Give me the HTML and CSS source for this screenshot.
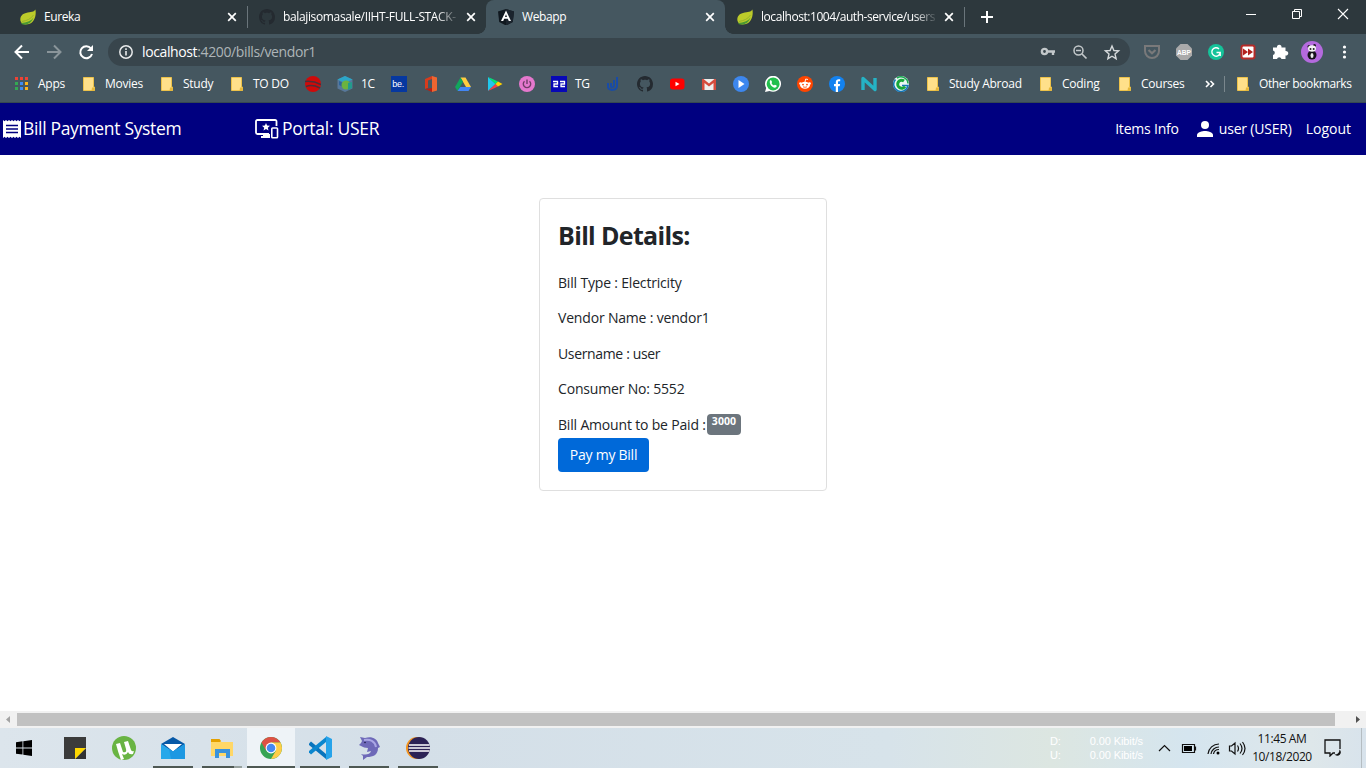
FILE: index.html
```html
<!DOCTYPE html>
<html lang="en">
<head>
<meta charset="utf-8">
<title>Webapp</title>
<link rel="stylesheet" href="styles.css">
</head>
<body>
<svg class="defs" width="0" height="0">
  <symbol id="leaf" viewBox="0 0 16 16"><path d="M15.400.600C14 3 11 3.200 6 4C1 5 0 9 .4 11.500C1 15 4 15.800 8 15.300C14 14.500 16.700 7 15.400.600z" fill="#bccb2a"/><path d="M1.500 14C6 13.500 11 12.500 13.500 8.500C11 15 6 16.500 1.500 15z" fill="#4c9a32"/><path d="M2 12.500C7 11.500 11 10 13.500 6" stroke="#98b42c" fill="none"/></symbol>
  <symbol id="close" viewBox="0 0 10 10"><path d="M1.200 1.200l7.600 7.600M8.800 1.200L1.200 8.800" stroke="#fff" stroke-width="1.700"/></symbol>
  <symbol id="folder" viewBox="0 0 14 16"><path d="M1.500 1.500h10v9.500h1v3.500h-11z" fill="#ffe08a" stroke="#edc24a"/><path d="M10 11.500h2.500V15H9.500z" fill="#e6b83a"/></symbol>
  <symbol id="github" viewBox="0 0 16 16"><path d="M8 0C3.580 0 0 3.580 0 8c0 3.540 2.290 6.530 5.470 7.590.4.070.55-.17.55-.38 0-.19-.01-.82-.01-1.490-2.010.37-2.530-.49-2.690-.94-.09-.23-.48-.94-.82-1.130-.28-.15-.68-.52-.01-.53.63-.01 1.080.58 1.230.82.72 1.210 1.870.87 2.330.66.070-.52.28-.87.51-1.070-1.780-.2-3.640-.89-3.640-3.950 0-.87.31-1.590.82-2.150-.08-.2-.36-1.020.08-2.120 0 0 .67-.21 2.200.82.64-.18 1.320-.27 2-.27s1.360.09 2 .27c1.530-1.040 2.200-.82 2.200-.82.44 1.100.16 1.920.08 2.120.51.56.82 1.270.82 2.150 0 3.070-1.870 3.750-3.650 3.950.29.25.54.73.54 1.480 0 1.070-.01 1.930-.01 2.200 0 .21.15.46.55.38A8.010 8.010 0 0 0 16 8c0-4.420-3.580-8-8-8z" fill="#242a30"/></symbol>
</svg>

<header class="tabs">
  <div class="tab"><svg width="17" height="16"><use href="#leaf"/></svg><span class="tab-title">Eureka</span><svg class="x" width="10" height="10"><use href="#close"/></svg></div>
  <div class="tab ruled"><svg width="16" height="16"><use href="#github"/></svg><span class="tab-title fade t2">balajisomasale/IIHT-FULL-STACK-</span><svg class="x" width="10" height="10"><use href="#close"/></svg></div>
  <div class="tab active"><svg width="16" height="16" viewBox="0 0 16 16"><path d="M8 0l8 2.500-1.200 10.500L8 16.500 1.200 13 0 2.500z" fill="#10181f"/><path d="M8 0v16.500L14.800 13 16 2.500z" fill="#1b242d"/><path d="M3 12L8 1.500 13 12h-2.200l-1-2.300H6.200l-1 2.300zM7 7.900h2L8 5.200z" fill="#fff"/></svg><span class="tab-title">Webapp</span><svg class="x" width="10" height="10"><use href="#close"/></svg></div>
  <div class="tab"><svg width="17" height="16"><use href="#leaf"/></svg><span class="tab-title fade t4">localhost:1004/auth-service/users</span><svg class="x" width="10" height="10"><use href="#close"/></svg></div>
  <svg class="newtab" width="44" height="34" viewBox="0 0 44 34"><path d="M.5 7v20" stroke="#6a757b"/><path d="M17 17h12M23 11v12" stroke="#fff" stroke-width="2"/></svg>
  <div class="window-controls">
    <svg width="46" height="28" viewBox="0 0 46 28"><path d="M18 14.500h10" stroke="#fff"/></svg>
    <svg width="46" height="28" viewBox="0 0 46 28"><path d="M18.500 11.500h7v7h-7zM20.500 11V9.500h7v7H26" stroke="#fff" fill="none"/></svg>
    <svg width="46" height="28" viewBox="0 0 46 28"><path d="M18 9l10 10M28 9L18 19" stroke="#fff" stroke-width="1.100"/></svg>
  </div>
</header>

<div class="toolbar">
  <svg width="32" height="34" viewBox="0 0 32 34"><path d="M23 18H10M16 11.500L9.500 18l6.500 6.500" fill="none" stroke="#fff" stroke-width="2"/></svg>
  <svg width="32" height="34" viewBox="0 0 32 34"><path d="M9 18h13M16 11.500l6.500 6.500-6.500 6.500" fill="none" stroke="#8a959a" stroke-width="2"/></svg>
  <svg width="32" height="34" viewBox="0 0 32 34"><path d="M21 14.500A6 6 0 1 0 22 20" fill="none" stroke="#fff" stroke-width="2"/><path d="M23 11v6h-6z" fill="#fff"/></svg>
  <div class="omnibox">
    <svg width="16" height="16" viewBox="0 0 16 16"><circle cx="8" cy="8" r="6.200" fill="none" stroke="#e8eaeb" stroke-width="1.500"/><path d="M8 7v4.500M8 4.300v1.600" stroke="#e8eaeb" stroke-width="1.600"/></svg>
    <span class="url"><b>localhost</b>:4200/bills/vendor1</span>
    <svg width="32" height="28" viewBox="0 0 32 28"><circle cx="12.500" cy="13.500" r="2.600" fill="none" stroke="#c3c8ca" stroke-width="2.400"/><path d="M15 13.500h8M21 13.500v3.500" stroke="#c3c8ca" stroke-width="2.400"/></svg>
    <svg width="32" height="28" viewBox="0 0 32 28"><circle cx="14.500" cy="12.500" r="4.500" fill="none" stroke="#c3c8ca" stroke-width="1.500"/><path d="M12 12.500h5M18 16l4.500 4.500" stroke="#c3c8ca" stroke-width="1.700"/></svg>
    <svg width="32" height="28" viewBox="0 0 32 28"><path d="M16 8l1.900 4.500 4.700.4-3.600 3.100 1.100 4.700-4.100-2.500-4.100 2.500 1.100-4.700-3.600-3.100 4.700-.4z" fill="none" stroke="#d5d9db" stroke-width="1.400"/></svg>
  </div>
  <div class="extensions">
    <svg width="32" height="34" viewBox="0 0 32 34"><path d="M9 12h14v5a7 7 0 0 1-14 0z" fill="none" stroke="#79797a" stroke-width="2"/><path d="M12.500 16l3.500 3.300 3.500-3.300" fill="none" stroke="#79797a" stroke-width="2.200"/></svg>
    <svg width="32" height="34" viewBox="0 0 32 34"><path d="M12.500 10h7l4.500 4.500v7L19.500 26h-7L8 21.500v-7z" fill="#aaa"/><text x="16" y="20.700" class="abp" textLength="14" lengthAdjust="spacingAndGlyphs">ABP</text></svg>
    <svg width="32" height="34" viewBox="0 0 32 34"><circle cx="16" cy="18" r="8" fill="#15c39a"/><path d="M19 15a4.200 4.200 0 1 0 1.200 3.500H16.500M20.200 18.500V22" fill="none" stroke="#fff" stroke-width="1.400"/></svg>
    <svg width="32" height="34" viewBox="0 0 32 34"><rect x="8.500" y="10.500" width="15" height="15" rx="3" fill="#b62b28"/><rect x="10.500" y="12.500" width="11" height="11" rx="1" fill="#fff"/><path d="M11 14.500l5 3.500-5 3.500zM16 14.500l5 3.500-5 3.500z" fill="#b3201d"/></svg>
    <svg width="32" height="34" viewBox="0 0 32 34"><path d="M9 13.500h4a2.300 2.300 0 1 1 4.500 0h4V17a2.300 2.300 0 1 1 0 4.500V25h-4a2.300 2.300 0 0 0-4.500 0H9v-4a2.300 2.300 0 0 0 0-4.500z" fill="#fff"/></svg>
    <svg width="32" height="34" viewBox="0 0 32 34"><circle cx="16" cy="18" r="11" fill="#b46ade"/><ellipse cx="16" cy="21" rx="4.500" ry="4.500" fill="#16131a"/><ellipse cx="16" cy="21.500" rx="1.500" ry="2.500" fill="#eee"/><circle cx="13" cy="12.500" r="1.500" fill="#16131a"/><circle cx="18.500" cy="11.500" r="1.500" fill="#16131a"/><ellipse cx="16" cy="14.500" rx="4" ry="3.300" fill="#f4f4f4"/><circle cx="14.500" cy="15" r="1" fill="#222"/><circle cx="17.700" cy="15" r="1" fill="#222"/></svg>
    <svg width="32" height="34" viewBox="0 0 32 34"><g fill="#fff"><circle cx="16.500" cy="13" r="1.600"/><circle cx="16.500" cy="18" r="1.600"/><circle cx="16.500" cy="23" r="1.600"/></g></svg>
  </div>
</div>

<nav class="bookmarks">
  <div class="bm apps"><svg width="16" height="16" viewBox="0 0 16 16"><path d="M2 1h3v3H2zM7 1h3v3H7zM12 1h3v3h-3z" fill="#ee4335"/><path d="M2 6h3v3H2zM2 11h3v3H2z" fill="#34a853"/><path d="M7 6h3v3H7zM7 11h3v3H7z" fill="#3b8cf5"/><path d="M12 6h3v3h-3zM12 11h3v3h-3z" fill="#fbb51a"/></svg><span>Apps</span></div>
  <div class="bm movies"><svg width="14" height="16"><use href="#folder"/></svg><span>Movies</span></div>
  <div class="bm study"><svg width="14" height="16"><use href="#folder"/></svg><span>Study</span></div>
  <div class="bm todo"><svg width="14" height="16"><use href="#folder"/></svg><span>TO DO</span></div>
  <div class="bm"><svg width="16" height="16" viewBox="0 0 16 16"><circle cx="8" cy="8" r="8" fill="#cf0a0a"/><path d="M0 5.500C5 5 11 6 16 8.500M1 10.500c4-1.500 9-1 14 1.500" stroke="#4c3038" stroke-width="1.500" fill="none"/></svg></div>
  <div class="bm onec"><svg width="16" height="16" viewBox="0 0 16 16"><path d="M8 0l7.500 3.500v9L8 16 .5 12.500v-9z" fill="#58789a"/><path d="M8 0l7.500 3.500L8 7 .5 3.500z" fill="#2ba6c8"/><path d="M2 5l4 2v4l-4-2z" fill="#2d649c"/><circle cx="9" cy="9" r="4.500" fill="#6cb33f"/><path d="M11 7l4-1v6l-4 2z" fill="#239b8c"/></svg><span>1C</span></div>
  <div class="bm"><svg width="16" height="16" viewBox="0 0 16 16"><path d="M0 0h16v16H0z" fill="#0638a0"/><text x="1.300" y="11" class="be">be.</text></svg></div>
  <div class="bm"><svg width="16" height="16" viewBox="0 0 16 16"><path d="M9 0L2 3v10l3-1V4.500L9 3z" fill="#d83b1c"/><path d="M9 0l5 1.500v13L9 16z" fill="#ef6530"/><path d="M2 13l7-1v4z" fill="#ba1e12"/></svg></div>
  <div class="bm"><svg width="16" height="16" viewBox="0 0 16 16"><path d="M5.500 1.500h5L16 11h-5z" fill="#ffcd40"/><path d="M5.500 1.500L0 11l2.500 4L8 5.700z" fill="#11a65c"/><path d="M5.300 11H16l-2.500 4h-11z" fill="#4286f5"/></svg></div>
  <div class="bm"><svg width="16" height="16" viewBox="0 0 16 16"><path d="M1 1v14l7.500-7z" fill="#20c7ed"/><path d="M1 1l7.500 7L11 5.500z" fill="#00e676"/><path d="M1 15l7.500-7 2.500 2.500z" fill="#f0404c"/><path d="M8.500 8L11 5.500 15.500 8 11 10.500z" fill="#ffd200"/></svg></div>
  <div class="bm"><svg width="16" height="16" viewBox="0 0 16 16"><circle cx="8" cy="8" r="8" fill="#e578ce"/><path d="M5.500 5.200a3.700 3.700 0 1 0 5 0M8 3.500v4.500" fill="none" stroke="#713d68" stroke-width="1.400"/></svg></div>
  <div class="bm tg"><svg width="16" height="16" viewBox="0 0 16 16"><path d="M0 0h16v16H0z" fill="#0808b6"/><path d="M2 5.500h4.500V8H3v2.500h4M9 5.500h4.500V8H10v2.500h4" fill="none" stroke="#fff" stroke-width="1.300"/></svg><span>TG</span></div>
  <div class="bm"><svg width="16" height="16" viewBox="0 0 16 16"><path d="M3 7v4c0 4 9 4 9-1V1M6 7v3c0 2 3 2 3-1V4" fill="none" stroke="#184ba8" stroke-width="2"/></svg></div>
  <div class="bm"><svg width="16" height="16"><use href="#github"/></svg></div>
  <div class="bm"><svg width="16" height="16" viewBox="0 0 16 16"><rect x="1" y="2.500" width="14.500" height="11" rx="3" fill="#f00"/><path d="M6.500 5.700v4.600l4-2.300z" fill="#fff"/></svg></div>
  <div class="bm"><svg width="16" height="16" viewBox="0 0 16 16"><path d="M1 3h14v11H1z" fill="#eee"/><path d="M1 3v11h2.500V7L8 10.500 12.500 7v7H15V3h-1.500L8 7.500 2.500 3z" fill="#d54b3d"/></svg></div>
  <div class="bm"><svg width="16" height="16" viewBox="0 0 16 16"><circle cx="8" cy="8" r="8" fill="#3d87ee"/><path d="M5.500 4v8l6-4z" fill="#fff"/></svg></div>
  <div class="bm"><svg width="16" height="16" viewBox="0 0 16 16"><path d="M0 16l1.200-4A8 8 0 1 1 4.500 15z" fill="#fff"/><circle cx="8.100" cy="7.900" r="6.500" fill="#22bf4d"/><path d="M5 4.500c1-.7 1.500 0 2 1.500 0 1-1 1 .2 2.300C8.600 9.800 9 9.400 9.800 8.800c1 .2 2 .8 2 1.300-1.300 4.200-8.500-.8-6.800-5.600z" fill="#fff"/></svg></div>
  <div class="bm"><svg width="16" height="16" viewBox="0 0 16 16"><circle cx="8" cy="8" r="8" fill="#ff4500"/><ellipse cx="8" cy="9.300" rx="4.900" ry="3.500" fill="#fff"/><circle cx="3.500" cy="7.500" r="1.300" fill="#fff"/><circle cx="12.500" cy="7.500" r="1.300" fill="#fff"/><circle cx="6" cy="8.600" r=".9" fill="#ff4500"/><circle cx="10" cy="8.600" r=".9" fill="#ff4500"/><path d="M8 6l.7-3L11 3.500" fill="none" stroke="#fff" stroke-width=".9"/><path d="M6 10.800q2 1 4 0" fill="none" stroke="#ff4500" stroke-width=".8"/></svg></div>
  <div class="bm"><svg width="16" height="16" viewBox="0 0 16 16"><circle cx="8" cy="8" r="8" fill="#1382f0"/><path d="M6.800 16v-5.700H5V8h1.800V6.200c0-2 1.200-3 3-3h1.400v2H10c-.8 0-1 .4-1 1V8h2.100l-.4 2.300H9V16z" fill="#fff"/></svg></div>
  <div class="bm"><svg width="16" height="16" viewBox="0 0 16 16"><path d="M2 14V2.500L14 13.500V2" fill="none" stroke="#25b3c5" stroke-width="3.400" stroke-linejoin="round"/></svg></div>
  <div class="bm"><svg width="16" height="16" viewBox="0 0 16 16"><circle cx="8" cy="8" r="8" fill="#e9f7f3"/><path d="M2.500 3.500A7.200 7.200 0 1 0 15 9.500H9" fill="none" stroke="#1577b8" stroke-width="1.500"/><path d="M11 5A4 4 0 1 0 12 10.500" fill="none" stroke="#17a83a" stroke-width="3"/><path d="M4 2.200A7 7 0 0 1 15 7.500" fill="none" stroke="#18a850" stroke-width="1.500"/></svg></div>
  <div class="bm abroad"><svg width="14" height="16"><use href="#folder"/></svg><span>Study Abroad</span></div>
  <div class="bm coding"><svg width="14" height="16"><use href="#folder"/></svg><span>Coding</span></div>
  <div class="bm courses"><svg width="14" height="16"><use href="#folder"/></svg><span>Courses</span></div>
  <svg class="more" width="19" height="16" viewBox="0 0 19 16"><path d="M1 5l3 3-3 3M5.500 5l3 3-3 3" fill="none" stroke="#fff" stroke-width="1.600"/></svg>
  <div class="bm other"><svg width="14" height="16"><use href="#folder"/></svg><span>Other bookmarks</span></div>
</nav>

<div class="navbar">
  <a class="brand"><svg width="18" height="18" viewBox="0 0 18 18"><path d="M0 0l1.500 1.200L3 0l1.500 1.200L6 0l1.500 1.200L9 0l1.500 1.200L12 0l1.500 1.200L15 0l1.500 1.200L18 0v18l-1.500-1.200L15 18l-1.500-1.200L12 18l-1.500-1.200L9 18l-1.500-1.200L6 18l-1.500-1.200L3 18l-1.500-1.200L0 18z" fill="#fff"/><path d="M3 5.500h12M3 9h12M3 12.500h12" stroke="#000080" stroke-width="1.500"/></svg><span>Bill Payment System</span></a>
  <a class="portal"><svg width="24" height="20" viewBox="0 0 24 20"><path d="M21.500 7V2.500Q21.500 1 20 1H2.500Q1 1 1 2.500v11Q1 15 2.500 15H14" fill="none" stroke="#fff" stroke-width="1.800"/><path d="M8 15v2H6v2h9v-4z" fill="#fff"/><path d="M11 4l1.100 2.600 2.900.2-2.200 1.900.7 2.800L11 10l-2.500 1.500.7-2.800L7 6.800l2.900-.2z" fill="#fff"/><rect x="16.800" y="9" width="5.700" height="9.800" rx=".8" fill="#000080" stroke="#fff" stroke-width="1.600"/></svg><span>Portal: USER</span></a>
  <div class="links"><a class="items">Items Info</a><a class="user"><svg width="16" height="16" viewBox="0 0 16 16"><circle cx="8" cy="4" r="4" fill="#fff"/><path d="M0 16v-2c0-2.700 5.300-4 8-4s8 1.300 8 4v2z" fill="#fff"/></svg><span>user (USER)</span></a><a class="logout">Logout</a></div>
</div>

<main>
  <section class="card">
    <h2>Bill Details:</h2>
    <p>Bill Type : Electricity</p>
    <p>Vendor Name : vendor1</p>
    <p class="username">Username : user</p>
    <p>Consumer No: 5552</p>
    <div class="amount"><span>Bill Amount to be Paid :</span><strong class="badge">3000</strong></div>
    <button>Pay my Bill</button>
  </section>
</main>

<div class="scrollbar">
  <svg width="17" height="17" viewBox="0 0 17 17"><path d="M10 5v7L6 8.500z" fill="#a3a3a3"/></svg>
  <div class="thumb"></div>
  <svg class="right-arrow" width="17" height="17" viewBox="0 0 17 17"><path d="M7 5v7l4-3.500z" fill="#505050"/></svg>
</div>

<footer class="taskbar">
  <div class="task start"><svg width="16" height="16" viewBox="0 0 16 16"><path d="M0 2.200L6.500 1.300v6.200H0zM7.300 1.200L16 0v7.500H7.300zM0 8.400h6.500v6.200L0 13.800zM7.300 8.400H16V16l-8.700-1.200z"/></svg></div>
  <div class="task"><svg width="22" height="22" viewBox="0 0 22 22"><path d="M0 0h22v11L11 22H0z" fill="#3b3b3b"/><path d="M22 11v11H11z" fill="#333"/><path d="M11 11h11L11 22z" fill="#ffd800"/></svg></div>
  <div class="task"><svg width="24" height="24" viewBox="0 0 24 24"><circle cx="12" cy="12" r="12" fill="#69b443"/><path d="M4 8l4-1 3 9q4 1 3-3l-2-7 4-1 3 9q1 2 3 1l-1 3q-4 1-5-2-2 4-6 2l2 5-3 1q-3-8-5-16z" fill="#fff"/></svg></div>
  <div class="task run"><svg width="24" height="24" viewBox="0 0 24 24"><path d="M0 8L12 1l12 7-12 9z" fill="#0759a7"/><path d="M3 8h18l-9 7.500z" fill="#fff"/><path d="M0 8l12 7.500L24 8v15H0z" fill="#28a8ea"/><path d="M24 8v15H10l-2-10 4 2.500z" fill="#1d98e2"/></svg></div>
  <div class="task run explorer"><svg width="22" height="22" viewBox="0 0 22 22"><path d="M0 3h9l1.500 2H22v14H0z" fill="#ffd767"/><path d="M0 2h8.500L10 4 9 5H0z" fill="#e4a000"/><path d="M4 12h15v9h-4v-5H8v5H4z" fill="#3a92dc"/></svg></div>
  <div class="task run current"><svg width="22" height="22" viewBox="0 0 22 22"><circle cx="11" cy="11" r="11" fill="#37a454"/><path d="M1.500 5.500A11 11 0 0 1 20.500 5.500H11L6.200 13.800z" fill="#dd5144"/><path d="M11 5.500h9.500A11 11 0 0 1 11 22l4.800-8.300z" fill="#ffcd46"/><circle cx="11" cy="11" r="5.400" fill="#fff"/><circle cx="11" cy="11" r="4.300" fill="#4688f1"/></svg></div>
  <div class="task run"><svg width="24" height="24" viewBox="0 0 24 24"><path d="M1 7.500l2-2 15 12.500v5L1 9z" fill="#0874bd"/><path d="M1 16.500l2 2L18 6V1L1 15z" fill="#0b86ce"/><path d="M18 0l6 3v18l-6 3z" fill="#26a3ea"/></svg></div>
  <div class="task run"><svg width="24" height="24" viewBox="0 0 24 24"><path d="M3 1l5 1c7-2 12 1 13 5l2 4-2 1c0 7-5 9-11 9l-4 3 0-4-2-2c4 1 9 1 10-3l-4 1 1-4c-3 0-5-1-7-2l-2-1 2-2 1-2z" fill="#6e69b8"/><path d="M7 4c6-1 11 1 12 7" stroke="#aaa7e5" fill="none" stroke-width="2"/><circle cx="8" cy="6.500" r=".8" fill="#1b1844"/></svg></div>
  <div class="task run"><svg width="24" height="24" viewBox="0 0 24 24"><circle cx="11" cy="12" r="11" fill="#f4941e"/><circle cx="13" cy="12" r="11" fill="#2c2255"/><path d="M3 9h20.500M2.500 12H24M3 15h20.500" stroke="#fff" stroke-width="1.600"/></svg></div>
  <div class="speed"><div><span>D:</span><span>0.00 Kibit/s</span></div><div><span>U:</span><span>0.00 Kibit/s</span></div></div>
  <svg class="tray" width="96" height="40" viewBox="0 0 96 40"><g fill="none" stroke="#111" stroke-width="1.200"><path d="M9 23l5.500-5.500L20 23"/><path d="M32.500 16.500h12v8h-12z"/><path d="M45.500 18.500v4"/><path d="M58 26a11 11 0 0 1 11-10M61 26a8 8 0 0 1 8-7M63.500 26a5.500 5.500 0 0 1 5.500-4.500"/><path d="M79.500 18v5h2l3.500 3V15l-3.500 3zM87.500 17.500q2 3 0 6M90 15.500q4 5 0 10M92.500 14q5 6.500 0 13"/></g><path d="M34 18h8v5h-8z"/><circle cx="68" cy="25" r="1.500"/></svg>
  <div class="clock"><span class="time">11:45 AM</span><span class="date">10/18/2020</span></div>
  <svg class="notify" width="18" height="18" viewBox="0 0 18 18"><path d="M11 14H9l-3 3v-3H1V1h15v9" fill="none" stroke="#111" stroke-width="1.300"/><path d="M15.500 10.500a3.500 3.500 0 1 1-5 4.800c3 .7 5-1.500 5-4.800z" fill="#111"/></svg>
  <div class="desktop"></div>
</footer>
</body>
</html>
```
FILE: styles.css
```css
* { box-sizing: border-box; }
body { margin: 0; width: 1366px; height: 768px; overflow: hidden; display: flex; flex-direction: column; background: #fff; font: 12px "Open Sans", "Noto Sans", sans-serif; color: #212529; }
svg { flex: none; display: block; }
.defs { position: absolute; }

.tabs { height: 34px; flex: none; display: flex; padding-left: 8px; background: #2d383d; color: #fff; }
.tab { width: 239px; height: 34px; flex: none; display: flex; align-items: center; padding: 0 10px 0 12px; position: relative; }
.tab > svg:first-child { width: 16px; }
.tab-title { width: 174px; flex: none; margin-left: 8px; margin-right: 9px; white-space: nowrap; line-height: 18px; letter-spacing: -.4px; }
.tab-title.t2 { letter-spacing: -.36px; }
.tab-title.t4 { letter-spacing: -.44px; }
.fade { -webkit-mask-image: linear-gradient(90deg, #000 88%, transparent 102%); mask-image: linear-gradient(90deg, #000 88%, transparent 102%); }
.ruled { border-left: 1px solid #5d686d; border-image: linear-gradient(transparent 7px, #6a757b 7px 27px, transparent 27px) 1; padding-left: 11px; }
.active { background: #455760; border-radius: 8px 8px 0 0; }
.active::before, .active::after { content: ""; position: absolute; bottom: 0; width: 8px; height: 8px; }
.active::before { left: -8px; background: radial-gradient(circle at 0 0, transparent 7.5px, #455760 8px); }
.active::after { right: -8px; background: radial-gradient(circle at 100% 0, transparent 7.5px, #455760 8px); }
.window-controls { display: flex; margin-left: auto; }

.toolbar { height: 34px; flex: none; display: flex; padding: 0 6px; background: #455760; }
.omnibox { width: 1022px; height: 28px; margin-top: 4px; margin-left: 6px; border-radius: 14px; background: #38454c; display: flex; align-items: center; padding: 0 2px 0 10px; }
.url { flex: 1; margin-left: 8px; font-size: 14px; letter-spacing: -.38px; color: #aeb5b8; line-height: 20px; }
.url b { font-weight: 400; color: #fff; }
.extensions { display: flex; margin-left: 6px; }
.abp { font: bold 7.500px "Liberation Sans", sans-serif; fill: #fff; text-anchor: middle; }

.bookmarks { height: 35px; flex: none; display: flex; align-items: center; padding: 0 0 3px 13px; background: #455760; border-bottom: 1px solid #364850; color: #fff; }
.bm { width: 32px; flex: none; display: flex; align-items: center; white-space: nowrap; letter-spacing: -.25px; line-height: 18px; }
.bm span { margin-left: 8px; }
.apps { width: 69px; }
.apps span { margin-left: 9px; }
.movies { width: 78px; }
.study { width: 70px; }
.todo { width: 75px; }
.onec { width: 54px; }
.tg { width: 54px; }
.be { font: 9px "Liberation Sans", sans-serif; fill: #fff; }
.abroad { width: 113px; margin-left: 1px; }
.coding { width: 79px; }
.courses { width: 87px; }
.other { height: 16px; border-left: 1px solid #7a878d; padding-left: 11px; width: 140px; }
.movies span, .study span, .todo span, .abroad span, .coding span, .courses span, .other span { margin-left: 9px; }
.other span { letter-spacing: -.4px; }

.navbar { height: 52px; flex: none; display: flex; align-items: center; background: #000080; color: #fff; padding-left: 3px; }
.brand, .portal { display: flex; align-items: center; font-size: 17.500px; letter-spacing: -.33px; white-space: nowrap; }
.brand { width: 252px; gap: 2px; }
.brand span, .portal span { padding-bottom: 2px; }
.portal { gap: 3px; letter-spacing: -.28px; }
.links { display: flex; align-items: center; margin-left: auto; padding-right: 15px; font-size: 14px; letter-spacing: -.2px; }
.links .items, .links .logout, .user span { padding-bottom: 2px; }
.links .logout { letter-spacing: 0; }
.user { display: flex; align-items: center; gap: 6px; margin: 0 14px 0 18px; }

main { height: 556px; flex: none; padding-top: 43px; }
.card { width: 288px; height: 293px; margin: 0 auto; border: 1px solid #dfdfdf; border-radius: 4px; padding: 18px; }
.card h2 { margin: 0 0 19px; font-size: 25px; line-height: 36px; font-weight: 700; letter-spacing: -.65px; white-space: nowrap; }
.card p { margin: 0 0 14.400px; font-size: 14px; line-height: 21px; letter-spacing: -.18px; white-space: nowrap; }
.card .username { letter-spacing: -.35px; }
.amount { display: flex; height: 24px; font-size: 14px; line-height: 21px; letter-spacing: -.18px; white-space: nowrap; }
.amount span { width: 149px; }
.badge { width: 34px; height: 21px; border-radius: 4px; background: #6c757d; color: #fff; font-size: 10.500px; line-height: 15px; letter-spacing: .1px; text-align: center; }
button { display: block; width: 91px; height: 34px; border: 0; border-radius: 4px; padding: 0; background: #0069d9; color: #fff; font: 14px "Open Sans", sans-serif; letter-spacing: -.25px; white-space: nowrap; }

.scrollbar { height: 17px; flex: none; display: flex; align-items: center; background: #f1f1f1; }
.thumb { width: 1318px; height: 13px; background: #c1c1c1; }
.right-arrow { margin-left: auto; }

.taskbar { height: 40px; flex: none; display: flex; background: linear-gradient(90deg, #dce5ec, #d4dfe8 30%, #d7e3ea 65%, #dce6e1 77%, #d5e5ef 87%, #dee7ea 96%, #d8e3ec); color: #111; }
.task { width: 48px; height: 40px; margin-right: 1px; flex: none; display: flex; align-items: center; justify-content: center; }
.start { margin-right: 3px; }
.run { background: linear-gradient(#4e5853, #4e5853) 50% 100% / 40px 2px no-repeat; }
.explorer { background: linear-gradient(90deg, #4e5853 32px, #98a29f 32px) 50% 100% / 40px 2px no-repeat; }
.current { background: linear-gradient(#4e5853, #4e5853) 50% 100% / 48px 2px no-repeat #eef3f7; }
.speed { width: 93px; margin: 6px 7px 0 auto; font: 11px/14px "Liberation Sans", sans-serif; color: #fff; white-space: nowrap; letter-spacing: -.1px; }
.speed div { display: flex; justify-content: space-between; }
.clock { width: 72px; display: flex; flex-direction: column; align-items: center; line-height: 18px; padding-top: 2px; letter-spacing: -.4px; white-space: nowrap; }
.notify { margin: 11px 19px 0 6px; }
.desktop { width: 5px; border-left: 1px solid #b5bdc2; }
```
